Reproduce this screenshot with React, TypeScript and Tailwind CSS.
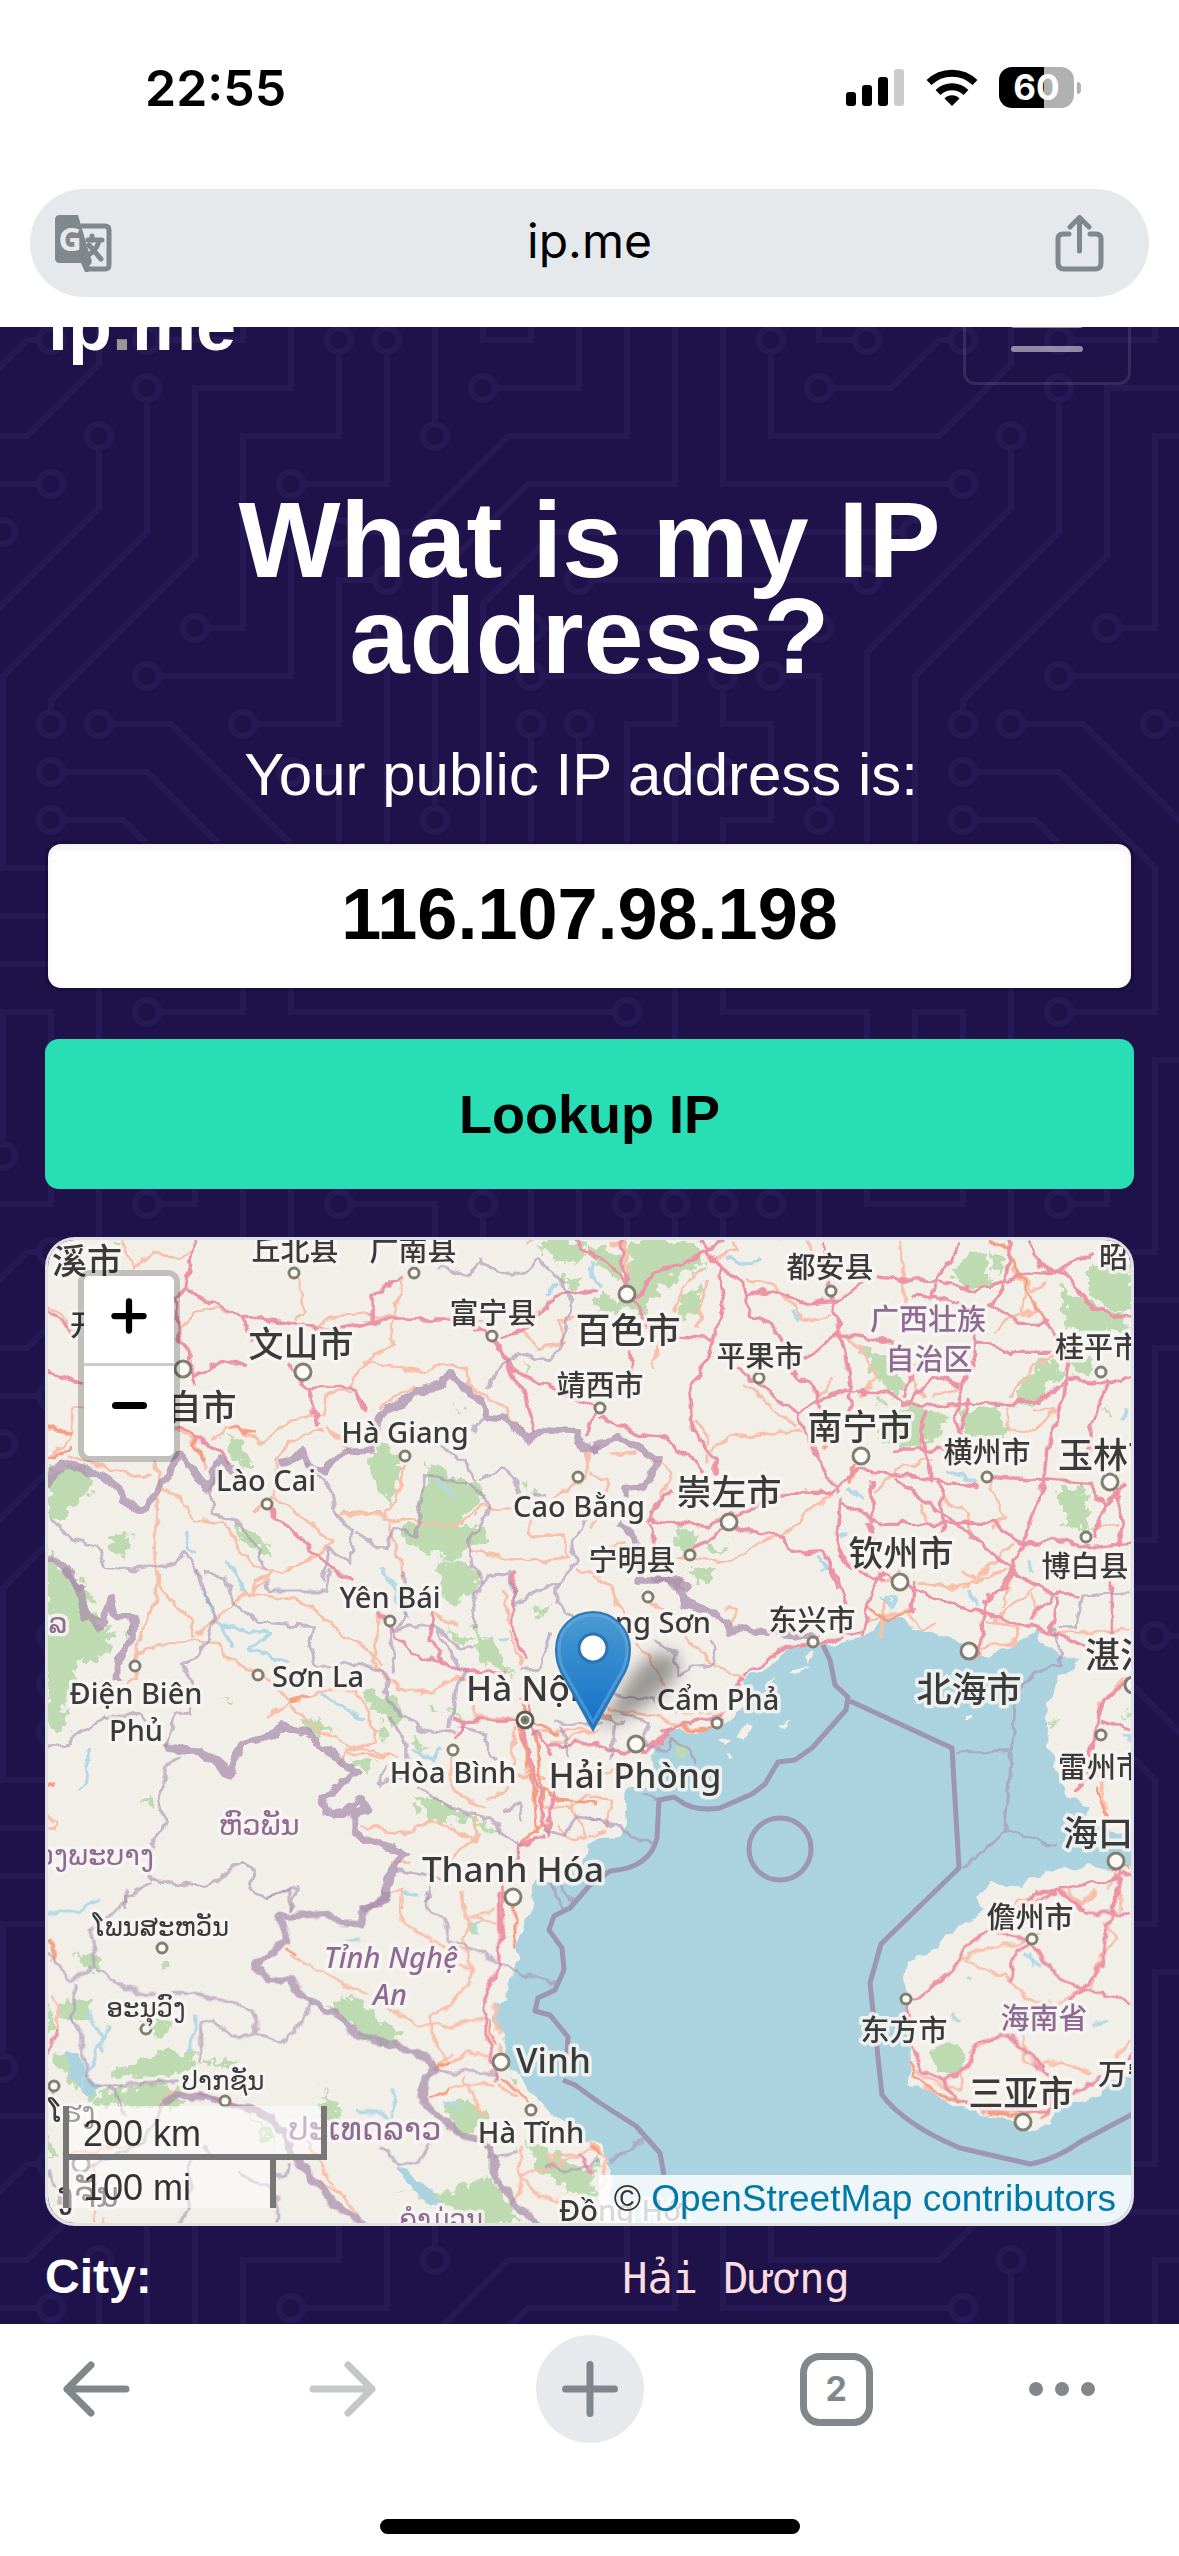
import React from 'react';
import { Plus } from 'lucide-react';

interface Place {
  name: string;
  x: number;
  y: number;
  size?: number;
  anchor?: 'start' | 'middle' | 'end';
  region?: boolean;
  italic?: boolean;
}

interface Tile {
  x: number;
  y: number;
  wood: string;
  water: string;
  minor: string;
  trunk: string;
  motorway: string;
  province: string;
  country: string;
}

// Node centres of the circuit pattern, the rings are cut out of the solid discs
const NODES = [
  [49, 225], [209, 273], [257, 225], [257, 241], [273, 129], [177, 129], [17, 81], [193, 113], [289, 113],
  [257, 17], [193, 225], [193, 161], [241, 17], [257, 33], [129, 129], [145, 225], [129, 113], [81, 161],
  [113, 241], [177, 161], [97, 177], [129, 225], [65, 289], [241, 177], [257, 145], [273, 193], [193, 241],
  [177, 145], [289, 33], [97, 97], [49, 145], [49, 33], [113, 33], [65, 129], [97, 81], [129, 33], [113, 17],
  [145, 65], [225, 289], [241, 145], [49, 17], [161, 49], [161, 17], [113, 97], [209, 17], [145, 193],
  [225, 17], [161, 225], [17, 161], [49, 49], [33, 209], [33, 65], [17, 33], [273, 49], [257, 209],
  [49, 241], [17, 193], [209, 257], [33, 161], [49, 257], [17, 177],
];

const CIRCUIT =
  'M44.1 224a5 5 0 1 1 0 2H0v-2h44.1zm160 48a5 5 0 1 1 0 2H82v-2h122.1zm57.8-46a5 5 0 1 1 0-2H304v2h-42.1zm0 16a5 5 0 1 1 0-2H304v2h-42.1zm6.2-114a5 5 0 1 1 0 2h-86.2a5 5 0 1 1 0-2h86.2zm-256-48a5 5 0 1 1 0 2H0v-2h12.1zm185.8 34a5 5 0 1 1 0-2h86.2a5 5 0 1 1 0 2h-86.2zM258 12.1a5 5 0 1 1-2 0V0h2v12.1zm-64 208a5 5 0 1 1-2 0v-54.2a5 5 0 1 1 2 0v54.2zm48-198.2V80h62v2h-64V21.9a5 5 0 1 1 2 0zm16 16V64h46v2h-48V37.9a5 5 0 1 1 2 0zm-128 96V208h16v12.1a5 5 0 1 1-2 0V210h-16v-76.1a5 5 0 1 1 2 0zm-5.9-21.9a5 5 0 1 1 0 2H114v48H85.9a5 5 0 1 1 0-2H112v-48h12.1zm-6.2 130a5 5 0 1 1 0-2H176v-74.1a5 5 0 1 1 2 0V242h-60.1zm-16-64a5 5 0 1 1 0-2H114v48h10.1a5 5 0 1 1 0 2H112v-48h-10.1zM66 284.1a5 5 0 1 1-2 0V274H50v30h-2v-32h18v12.1zM236.1 176a5 5 0 1 1 0 2H226v94h48v32h-2v-30h-48v-98h12.1zm25.8-30a5 5 0 1 1 0-2H274v44.1a5 5 0 1 1-2 0V146h-10.1zm-64 96a5 5 0 1 1 0-2H208v-80h16v-14h-42.1a5 5 0 1 1 0-2H226v18h-16v80h-12.1zm86.2-210a5 5 0 1 1 0 2H272V0h2v32h10.1zM98 101.9V146H53.9a5 5 0 1 1 0-2H96v-42.1a5 5 0 1 1 2 0zM53.9 34a5 5 0 1 1 0-2H80V0h2v34H53.9zm60.1 3.9V66H82v64H69.9a5 5 0 1 1 0-2H80V64h32V37.9a5 5 0 1 1 2 0zM101.9 82a5 5 0 1 1 0-2H128V37.9a5 5 0 1 1 2 0V82h-28.1zm16-64a5 5 0 1 1 0-2H146v44.1a5 5 0 1 1-2 0V18h-26.1zm102.2 270a5 5 0 1 1 0 2H98v14h-2v-16h124.1zM242 149.9V160h16v34h-16v62h48v48h-2v-46h-48v-66h16v-30h-16v-12.1a5 5 0 1 1 2 0zM53.9 18a5 5 0 1 1 0-2H64V2H48V0h18v18H53.9zm112 32a5 5 0 1 1 0-2H192V0h50v2h-48v48h-28.1zm-48-48a5 5 0 0 1-9.8-2h2.07a3 3 0 1 0 5.66 0H178v34h-18V21.9a5 5 0 1 1 2 0V32h14V2h-58.1zm0 96a5 5 0 1 1 0-2H137l32-32h39V21.9a5 5 0 1 1 2 0V66h-40.17l-32 32H117.9zm28.1 90.1a5 5 0 1 1-2 0v-76.51L175.59 80H224V21.9a5 5 0 1 1 2 0V82h-49.59L146 112.41v75.69zm16 32a5 5 0 1 1-2 0v-99.51L184.59 96H300.1a5 5 0 0 1 3.9-3.9v2.07a3 3 0 0 0 0 5.66v2.07a5 5 0 0 1-3.9-3.9H185.41L162 121.41v98.69zm-144-64a5 5 0 1 1-2 0v-3.51l48-48V48h32V0h2v50H66v55.41l-48 48v2.69zM50 53.9v43.51l-48 48V208h26.1a5 5 0 1 1 0 2H0v-65.41l48-48V53.9a5 5 0 1 1 2 0zm-16 16V89.41l-34 34v-2.82l32-32V69.9a5 5 0 1 1 2 0zM12.1 32a5 5 0 1 1 0 2H9.41L0 43.41V40.6L8.59 32h3.51zm265.8 18a5 5 0 1 1 0-2h18.69l7.41-7.41v2.82L297.41 50H277.9zm-16 160a5 5 0 1 1 0-2H288v-71.41l16-16v2.82l-14 14V210h-28.1zm-208 32a5 5 0 1 1 0-2H64v-22.59L40.59 194H21.9a5 5 0 1 1 0-2H41.41L66 216.59V242H53.9zm150.2 14a5 5 0 1 1 0 2H96v-56.6L56.6 162H37.9a5 5 0 1 1 0-2h19.5L98 200.6V256h106.1zm-150.2 2a5 5 0 1 1 0-2H80v-46.59L48.59 178H21.9a5 5 0 1 1 0-2H49.41L82 208.59V258H53.9zM34 39.8v1.61L9.41 66H0v-2h8.59L32 40.59V0h2v39.8zM2 300.1a5 5 0 0 1 3.9 3.9H3.83A3 3 0 0 0 0 302.17V256h18v48h-2v-46H2v42.1zM34 241v63h-2v-62H0v-2h34v1zM17 18H0v-2h16V0h2v18h-1zm273-2h14v2h-16V0h2v16zm-32 273v15h-2v-14h-14v14h-2v-16h18v1zM0 92.1A5.02 5.02 0 0 1 6 97a5 5 0 0 1-6 4.9v-2.07a3 3 0 1 0 0-5.66V92.1zM80 272h2v32h-2v-32zm37.9 32h-2.07a3 3 0 0 0-5.66 0h-2.07a5 5 0 0 1 9.8 0zM5.9 0A5.02 5.02 0 0 1 0 5.9V3.83A3 3 0 0 0 3.83 0H5.9zm294.2 0h2.07A3 3 0 0 0 304 3.83V5.9a5 5 0 0 1-3.9-5.9zm3.9 300.1v2.07a3 3 0 0 0-1.83 1.83h-2.07a5 5 0 0 1 3.9-3.9z';

const SEA =
  'M611 2230L611 2177 608 2157 601 2143 586 2142 551 2113 529 2090 508 2063 504 2037 494 2020 494 2003 506 2000 508 1980 517 1967 517 1943 533 1907 531 1895 538 1880 554 1883 575 1880 583 1863 590 1845 597 1838 622 1837 626 1823 624 1800 629 1787 647 1787 654 1757 661 1737 672 1730 694 1732 722 1727 747 1703 744 1680 769 1667 790 1648 811 1645 833 1645 861 1638 876 1630 882 1618 894 1616 911 1628 947 1638 963 1643 969 1658 986 1657 1008 1647 1026 1640 1036 1627 1040 1643 1054 1653 1079 1660 1076 1670 1058 1673 1054 1693 1047 1703 1045 1747 1054 1757 1058 1780 1065 1793 1079 1803 1090 1807 1085 1818 1097 1823 1110 1830 1150 1833V2230Z';

const ISLAND =
  'M1140 1863L1119 1870 1090 1867 1054 1870 1029 1877 1022 1887 994 1883 976 1897 979 1907 983 1910 958 1927 926 1953 908 1962 903 1977 910 2000 908 2023 911 2057 910 2085 929 2090 954 2107 976 2113 1011 2120 1029 2132 1051 2123 1054 2107 1079 2103 1097 2097 1108 2083 1140 2066Z';

const MARITIME =
  'M823 1645L830 1660 835 1685 848 1697 846 1710 812 1748 795 1760 778 1762 765 1784 752 1794 720 1808Q695 1812 680 1801L674 1797 659 1800 657 1838Q650 1868 610 1871L590 1885 570 1908 554 1916 549 1930 562 1948 564 1970 555 1990 538 1998 535 2011 550 2015 568 2037 567 2055M563 2080L575 2085 600 2103 636 2126 660 2153 664 2175M850 1701L952 1748 959 1868 881 1944 870 1983 882 2095Q905 2125 960 2148L1030 2164Q1055 2160 1080 2142L1140 2110';

// Road and border geometry, one entry per map tile, tile-local units
const TILES: Tile[] = [
  {
    x: 40,
    y: 1230,
    wood: 'M1390 30l90-5 50 30-25 40-80-5zM1475 140l40 10-10 30-30-10zM510 615l50 20 40 50-10 40-50-30zM960 640l50 40-5 60-30 80-50-70 10-80zM1090 690l60 50 90 30-5 50-60 60-80 30-40-60 20-80zM1010 880l80-10 150 20 10 40-90 50-60-10-70-20zM1120 980l80 20 20 90h-90zM550 890l60 20 30 40-10 30-60-50zM20 720l80-20 50 50-30 60-60 50h-40zM190 920l70-10-20 70-40-20zM1350 750l30 20-20 25zM20 960l50 50 50 80h-100zM200 30l30 0-20 20zM1350 390l20 20-10 20zM1170 520l20 20-15 10z',
    water: 'M1420 190l30-30M410 900l10 60 20 10M520 1000l30 30 30 60M950 1010l40 50 30 20M1110 750l50 60M1550 100l10 60',
    minor:
      'M20 230L60 250 90 300M230 30L260 120 310 60 390 90 420 60M710 100L730 180 740 240 720 270M390 300L440 240 500 235 530 250M770 300L820 260 900 250 990 265 990 350 920 390 880 440 870 480M1025 135L1000 220 990 265M900 390L1040 420 1080 430 1120 400 1190 410 1200 460 1300 540 1360 610M950 540L1010 490 1050 470M20 590L90 610 60 650 20 690M90 610L90 540 140 530M380 600L440 640 470 720M480 630L520 590 560 600 620 640 650 620 700 570 790 560 800 500 850 480 870 490M600 850L660 790 660 690 700 630 790 600M800 590L850 640 870 670M1020 700L1010 780 960 860 1060 880 1160 890 1240 830 1330 840M380 790L440 870 520 880 560 960 600 1010 680 1030 800 960 820 930 650 800M830 850H960M970 870L990 940 1020 1040M1370 860L1370 920 1460 920 1480 980 1370 1000 1200 960M320 690L340 770 380 790M330 790L320 950 325 1080M80 680L200 720 310 740M1150 260L1260 270M1400 240L1350 300 1400 350 1470 340 1460 270 1520 250M1530 660L1530 740 1440 800M1360 40L1390 30M640 1030L600 1080',
    trunk: 'M20 590L90 610M25 690L90 650M390 590L430 620 460 700M530 590L600 610',
    motorway:
      'M430 30L410 170 440 200 510 230 560 260 640 270 720 280 800 300 930 280 930 200 960 170 1025 135M410 170L380 200 390 330 420 370 430 460M560 260L600 330M20 430L120 460M20 240L60 270 90 320M430 440L500 400 580 410M700 400L740 480 870 470 910 540M750 480L780 590M380 590L500 660 530 710M640 840L700 890 780 980 870 1060M930 270L1150 270 1240 300 1290 350 1320 420 1410 460 1560 540M1290 340L1310 420 1360 500 1390 610M1290 320L1360 300 1440 200 1560 180M1500 30L1560 90M1560 540L1530 620',
    province:
      'M1120 110L1200 140 1230 90 1280 130 1360 130 1400 90 1460 160 1490 210 1470 330 1420 390 1340 370 1280 420 1250 480M480 740L480 850 550 870 610 960 630 1020M740 700L820 780 830 850 870 900 870 1000 810 960 790 1060M880 910L970 960 990 890 1050 920 1080 740 1160 750 1220 770M1120 650L1180 690 1220 750M1220 770L1260 830 1200 940 1210 1010 1240 1060M1230 750L1300 710 1330 760 1340 800 1420 790M30 860L90 930 160 950 190 1010 260 1020 370 1000 410 970 440 1030M1530 870L1490 930 1500 1000 1450 1060M1210 600L1240 560',
    country:
      'M20 770L60 700 130 720 210 760 230 810 290 840 350 750 390 670 430 720 470 780 500 690 560 740M670 700L740 670 750 710 800 720 850 665 930 660 950 560 1060 480 1120 470 1150 430 1240 520 1250 560 1310 570 1370 630 1420 600 1500 605 1520 650 1568 655M20 980L70 1010 120 1080',
  },
  {
    x: 590,
    y: 1230,
    wood: 'M110 30h160l60 60-60 40-90 60-30 70-60-40zM0 40l100 50-10 60-90-60zM20 200l80 10-20 40h-60zM1030 100l70-40 20 100-70 20-30-40zM1120 60l40 30-20 60zM1400 110l115-10v150l-60-10-60-50zM1320 170l100 60 80 30v45l-170-10zM750 340l80 40 60 90-40 30-60-70zM1280 380l50 40-80 100-70 5 20-60zM900 510l110 60-60 70-100 20-50-60zM1030 550l80-30 60 50-20 50-100 0zM240 900l60-5-20 90-40-30zM1310 765l80 10 10 60-15 70-60-40zM270 1020l90 10-40 30zM1340 390l70-10-10 60-60-20zM1440 530l20 20-20 10zM270 180l50-10-20 90-60 5zM1150 160l10 20-10 20zM330 940l60 20-50 10zM790 490l30 10 0 30z',
    water: 'M380 80l70 30 30-30M1000 720l80 40M730 780l30 30M700 920l20-10M640 980l30 40M560 240l30 30M1220 990l20 40M1490 570l15-30M0 120l30 50',
    minor:
      'M50 40H100L110 130M240 250L260 170 320 110M300 290L330 150M400 30L410 60 340 90M610 40L630 120M870 30L880 220 860 240M440 150L510 160 560 220 600 270 680 260M180 420L190 340 250 310M700 300L770 370 800 440 760 500M590 600L480 610 400 620 340 660M430 460L580 590M300 570L330 620 330 700M100 940L50 950M240 980L390 1000 450 950 560 900 630 830 680 790M550 790H610L600 770M800 790L850 720 960 690M930 820L940 880M940 500L880 420 960 380M1130 310L1200 250 1260 250M1210 260L1220 180 1180 110M1180 500L1250 400 1300 380M1170 530L1170 600 1230 610 1310 540 1240 540M1110 740L1160 860 1120 900M1280 160L1240 180 1200 130M1480 880L1400 900M1040 1080L1120 1010 1190 940M820 1060L880 1010M60 670H130M170 690L230 730 200 800M0 730L50 750 40 850 0 900M920 1060L1060 1070M690 440L640 500M960 500L1040 470M980 800L1060 850 1060 920',
    trunk: 'M1120 30L1170 60 1190 110 1230 190 1280 280M680 600L650 660M740 700L730 760M1150 1080L1190 1010',
    motorway:
      'M0 60L70 120 130 230 180 320M90 30L100 170M130 210L180 130 320 70 370 30M310 30L360 110 370 240 330 380 280 480 290 600 350 690 350 740M360 110L430 160 450 260 510 280 540 340 580 440 640 480 640 550M440 190L510 180 600 220 700 210 770 150M650 30L660 140 680 220 700 310 720 400 730 560M600 390L690 310 850 340M410 410L580 550 620 640 640 700 700 790M580 550L700 480 830 490 890 520 960 530 1060 520 1180 520 1260 510 1340 450 1450 460 1515 440M800 140L870 150 970 150 1040 40M970 150L1080 180 1200 140 1320 120 1410 70M970 150L950 210M1180 30L1160 170 1120 220 1200 280 1280 280M1080 330L1180 370H1290M1230 30L1260 110 1330 130 1390 210 1470 260 1515 260M1270 270L1340 400 1330 500 1280 650 1270 760 1220 920 1180 1020 1150 1080M900 200H970L1080 240 1080 370 1040 490 1020 560 1040 620M900 430L880 500M0 480L60 500 120 440 110 360M30 560L140 610 200 620 290 690 320 730M160 880L180 830 230 780M160 870L330 890 400 850M270 970L380 890 540 920 560 970 660 965M400 870L450 830 550 790 670 790 740 720 850 730 960 750 1090 770M850 660L960 660 1060 650M790 750V880M850 740L960 830 1050 900 1180 1020 1280 1080M700 800L690 960 720 1000 820 1060M700 820L820 880 1130 880 1210 940 1320 930 1400 950 1515 940M980 750L990 900M1120 740L1280 750 1400 760 1440 830 1410 930M1450 450L1400 600 1400 680M1440 830L1500 760M1470 790L1495 870 1480 940M170 880L180 950M660 970L690 1080M560 20L530 30M240 320L340 330M940 540L930 640 960 760M880 530L960 440 1040 470M1060 510L1040 600M780 880L800 930',
    province: 'M1500 400L1515 380M170 1040L250 1080',
    country: 'M0 660L70 620 130 650 190 690 150 770 100 775 100 800M80 880L130 920 140 1040M180 1045L250 1060 280 1080',
  },
  {
    x: 40,
    y: 1570,
    wood: 'M20 0h60l50 60 20 90 50 20-5 80-80 20-40 110-5 100h-50zM1110 0h100l30 30-80 80-30-30zM1200 170l60 30 70 130-80-50zM910 360l80 20 30 50-20 40-90-70zM1090 400l30 20-20 20zM1150 410l30 30-20 10zM1140 180l60 30-20 15zM1380 130l60-40-20 50zM730 440l70 20 20 30-60-10zM860 570h80l-20 40zM1040 660l60 20 110 70 80 30-10 20-100-50-60 10-50-40zM285 685h35v15h-35zM510 390l30 10-20 5zM940 460l40 30-10 30zM1040 510l40 20-10 30zM1010 490l30 20zM240 170l15 0-5 50z',
    water: 'M450 60L490 140 510 170 540 230M510 170L640 190 590 240 700 280M970 20L1000 80 1040 150M1050 540L1100 570 1130 530M790 370L850 420 910 445M1280 200l30 10M550 10l20 60M1020 970l40 10M1480 890l20 30M100 660L130 640 135 540',
    minor:
      'M330 0L330 90 290 170 270 260 270 330 240 340M270 260L310 230 430 210 500 220 530 270 590 300 640 330 700 390 640 440M330 30L380 110 430 150 430 200M440 190L540 100 580 70 720 90 780 130 840 190 900 220 960 290M600 70L600 30 660 0M720 390L800 360 880 360 920 430 940 520 860 540 840 580M700 400L750 460 870 530 1000 560M860 550L980 560M950 200L930 280 1000 350 1100 370 1150 320 1200 330M950 130L940 250M1300 60L1310 150 1330 190M1100 130L1170 170M1150 550L1150 650 1200 690 1250 710M1210 410L1220 440 1330 450M1330 470L1320 640M1400 480H1568M1430 520L1560 480M1340 620H1420M1250 690L1310 650M1390 700L1480 720 1540 670M1480 700L1530 800 1480 810 1450 760M900 770L1020 790 1100 750 1220 810 1230 790M1220 730L1220 810 1180 830 1150 870M980 960L1020 960 1020 1020M20 650L40 640M20 740L45 750 40 780 20 770M1180 960L1190 1020M1040 880L980 880M1310 180L1350 290M1500 0L1568 20',
    trunk: 'M20 650L40 645M1340 380L1390 500 1400 620 1410 760 1340 830M1340 470L1380 640 1390 790M700 390L750 375M1360 440L1450 490M1560 700L1450 690 1390 650M1300 900L1300 1020',
    motorway: 'M830 0L870 40M950 120L1000 200 1060 260 1140 280 1180 300 1300 310M1100 130L1090 210 1130 280M1330 0L1320 170 1360 270M1160 450L1340 455M1350 480L1390 640 1420 790M1390 480L1440 560M1420 525L1568 520M1160 510L1190 450M1370 440L1370 330M1410 800L1340 830 1340 880M1290 960L1285 1020M1440 650L1420 800',
    province:
      'M20 530L80 520 180 440 280 430 300 460M440 0L460 80 490 130 470 210 440 260 390 280 430 330 420 430 380 430 370 480 350 530M460 10L520 20 540 100 620 160 770 170 750 230 780 290 880 280 970 310 970 380 990 420 1070 480 1160 490M630 30L640 60 800 60 810 0M980 170L990 310M1020 0L1030 140 990 180 1100 160 1180 240 1220 230M1110 180L1180 300M1220 180L1210 100 1250 20 1320 10 1330 100 1450 40 1450 100 1500 150M1150 480L1170 330 1200 300M1350 300L1400 290 1430 190M390 560L350 590 350 660 330 700 350 760 310 830 310 930 440 950 500 930 560 880 600 900 590 960 630 980 720 950 700 1020M310 940L240 980 240 1020M980 440L1030 530 1030 620 950 640 970 580M1170 470L1250 490 1250 540 1280 570M1390 480L1380 500M1440 460H1568M1460 470L1480 560M1060 650L1140 710 1240 740 1350 830M1300 720L1340 700 1350 760M1000 900L1130 930M1100 930L1080 1000M1410 780L1470 800 1500 740 1568 750M1430 940L1470 1020M1450 930L1500 1010',
    country:
      'M70 0L110 50 130 140 170 170 200 90 210 140 260 140 260 200 220 270 220 330M350 530L440 545 490 570 530 610 570 520 640 500 680 470 750 490 800 540 890 610 790 680 800 730 850 730 900 690 920 720 880 730 880 790 1020 850 970 930 970 990 900 1020',
  },
  {
    x: 590,
    y: 1570,
    wood: 'M230 525l40 5 10 30-30 0zM280 0h80l-30 30zM1300 440l10 30-10 10zM290 380l40 20-20 20zM1495 420l20 20-15 10z',
    water: 'M1060 60l20 50M830 80l30 0-20 40zM650 0l10-10M1490 500l25 0M1500 510h15',
    minor:
      'M60 60L130 220 200 320 210 360M170 90L350 290 430 330M0 20L70 60 70 110M380 120L410 115 400 170M770 150L860 130 900 120M820 90L820 210M890 130L930 180 970 160M920 40L1030 50 1160 0M1040 0L1100 30M1110 150L1200 170 1200 220 1110 230M1130 150L1250 50M1190 0L1160 110M1090 240L1200 210M1240 70L1250 140M1310 190L1515 180M1500 320L1430 400 1420 460M1420 600L1450 720M0 430L60 450M50 420L200 440 240 470 290 485M240 430L380 425M0 680L60 690 40 770M0 800L40 780M0 620L90 590M1310 960L1380 1000 1420 960M1300 960L1210 990 1160 1020M1480 890L1450 960',
    trunk: 'M780 110L830 150 900 125M1080 270L1100 250M240 470L330 480 380 440M1460 900L1515 890M0 430L60 440M1420 650L1450 740',
    motorway:
      'M680 0L720 100M820 0L780 100 760 200M820 10L910 60 1030 110 1110 130 1200 160 1300 190 1380 230M910 30L900 130M1170 0L1300 70 1230 150M1300 70L1370 75M1120 70L1100 150 1090 260M1100 100L1170 50 1190 0M1310 80L1290 190M1460 30L1460 190M430 320L550 230 640 225 760 180M400 360L430 330M0 520L100 550 160 550 240 470 380 430M200 490L240 470M160 530L230 490M1515 320L1440 390 1410 480 1400 620M1430 450L1510 480M1360 660L1400 620M1515 910L1400 940 1310 960 1250 970 1210 1010M1300 960L1390 1020M1490 900L1460 1020',
    province:
      'M0 360L180 390M180 210L240 250 240 320 300 290 350 280 340 210M90 430L160 460 160 530 210 535 230 510 290 550 290 590M0 740L40 760 80 770 170 825M1310 170L1360 170 1380 75 1515 65M1300 170L1320 280 1225 320 1190 400 1180 550 1165 785 1310 830M1020 545H1180M1165 785L1040 890M70 450L60 560M150 670L190 690M0 440L90 455',
    country: 'M130 30L240 30 270 100 350 130 390 160 390 190 430 170 470 190H520L640 200',
  },
  {
    x: 40,
    y: 1890,
    wood: 'M800 350l80-35 60 70 75 40-20 40-80-15-60-70zM200 540l150-50 90-5-20 50-60 20-160 10zM180 600l150-20 90 15-60 60-220-10zM20 500l50-20 90 120-20 40zM100 330l50 10-20 50-70-10 20-70zM270 400l90-10 10 40h-90zM100 200l50-20 20 60-30 0zM430 520l130-5-20 20zM790 600l60 80-40 20-20-30zM1130 640l80-10 50 50-70 60-50-40zM980 900l80 20 100-20 90-40 60 70 40 70h-140l-40-40zM580 660l60 70 10 50zM1360 750l200 100-20 80-80-40-60-50zM20 740l40 50-40 30zM1190 100l50-10-20 50zM1290 150l20 50zM1310 560l40 20-20 10zM330 210l30 20-20 5zM20 350l20 50-20 50zM680 810l30 30z',
    water: 'M20 75L100 60 170 30M130 370L160 420 180 490M200 400L150 500 110 600M440 370L420 490M860 150l30 0M880 660L940 670 980 680M1130 640l60 10M550 550l20 40M1215 100l10 30M990 600L990 680',
    minor:
      'M1010 20L1010 80 1060 130 1130 170 1200 180M1190 0L1180 50 1210 100 1180 150 1210 240 1200 290 1140 350 1090 380 1100 450 1150 520 1200 490 1260 500M1050 400L1150 410 1250 390M700 200L780 240 840 280 920 310M970 350L1050 400M1110 530L1160 490M1090 620L1160 590 1270 580M1190 560L1210 620 1250 680M1330 30L1330 170M1270 60L1210 80 1280 100M30 140L45 200 20 220M30 320L50 370 50 420M340 650L360 610 420 605M60 790L170 780 290 760M150 820V1000M740 740L820 880 890 970M540 645L620 660M1270 340L1290 440M1350 770L1340 850 1420 840 1530 780M1340 850L1400 920 1470 940M1430 840L1430 800 1560 780M1350 860L1320 950M1150 230L1210 235M1280 460L1300 500 1260 550M185 980V1000M780 880L860 920M1280 580L1330 620',
    trunk: 'M30 140L40 210M1260 390L1270 460M1290 560L1370 640M1090 620L1140 600M690 180L720 200M1105 535L1150 520M1330 20V180',
    motorway: 'M1285 0V230L1245 310 1250 430 1265 500 1275 570M1300 0L1290 160M50 420L35 460 25 490M35 600V640M1510 780L1540 850M440 610L560 645',
    province:
      'M240 0L240 40 140 120 160 230 90 270 20 190M160 240L220 280 300 310 440 310 600 360 605 430 560 450 480 390 450 400 450 520M100 280L90 370 120 430 120 510 150 590 390 575M200 590L240 680M605 430L690 455 750 370 750 330M350 640L290 760 130 830M1080 0L1090 60 1130 90 1140 150 1230 180 1280 220 1330 240 1440 280M700 0L700 60M630 20L700 0M960 770L1000 820 1060 830 1090 760M1110 540L1160 550 1210 540 1280 560M1270 800L1340 780M1420 830L1500 840 1568 810M420 800L415 960 390 1000M20 840L60 940M550 850L640 890 670 930 660 1000M660 860L690 860 700 820M450 770L480 790M1240 760L1260 800',
    country:
      'M970 0L970 20 910 60 890 100 840 100 800 70 670 80 690 150 600 230 640 265 700 270 740 320 800 360 850 390 900 440 990 460 1080 500 1110 540 1080 560 1070 620 1110 680 1180 735 1240 750 1270 800 1270 850 1320 930 1390 1000M350 640L380 615 460 620 560 650 630 670 690 730 700 780 760 860 820 940 910 1000',
  },
  {
    x: 590,
    y: 1890,
    wood: 'M920 470l60-10 20-40 60 50-10 60-70 20-60-40zM1240 290l50-10 30 10-10 40-60 5zM940 350l50-5-30 20zM1430 350l30 0-20 25zM1210 490l20 20zM0 800l40 30-40 10zM1040 600h30l-20 15z',
    water: 'M1210 190l60 40M1010 370l20 20M1410 410l40-20M1050 260l20 10M1230 190l10 40',
    minor:
      'M900 330L1000 260 1040 210 1090 180 1200 160 1280 120M1050 210L1160 260 1180 280 1230 330 1300 340 1360 310M910 540L1000 600 1040 600 1040 550M1400 300L1430 200 1470 150 1440 100M1210 440L1220 510 1260 520M1260 530L1320 510 1400 550M1060 490L1110 460M1110 640L1280 660M1470 500L1515 450M1480 0L1490 60M1340 0L1370 40 1420 0M930 590L1000 620M1280 560L1290 650M0 760L50 800 40 850 30 900',
    trunk: 'M900 520L910 560 990 620 1060 640M1100 665L1180 675 1280 665M1280 650L1270 690M0 770L30 790',
    motorway:
      'M1300 10L1200 60 1160 90 1050 170 1020 240 960 290 890 340 900 460 930 540 990 575 1060 530 1080 465 1160 430 1250 510 1280 560M1300 0L1390 70H1515M1140 120L1240 160 1290 240 1380 300 1480 320 1515 350M1240 160L1190 180 1180 280M1480 0L1460 80 1440 150 1430 230 1380 300M990 575L1030 635 1100 660 1280 665 1290 600 1360 610 1430 560M1380 300L1340 330M1250 0L1300 10M1480 550L1515 500',
    province: 'M60 810L150 750',
    country: '',
  },
];

const PLACES: Place[] = [
  { name: '溪市', x: 87, y: 1274, size: 35 },
  { name: '丘北县', x: 295, y: 1261 },
  { name: '广南县', x: 413, y: 1261 },
  { name: '富宁县', x: 493, y: 1324 },
  { name: '文山市', x: 301, y: 1357, size: 35 },
  { name: '开远市', x: 70, y: 1336, anchor: 'start' },
  { name: '蒙自市', x: 184, y: 1420, size: 35 },
  { name: 'Hà Giang', x: 405, y: 1443 },
  { name: 'Lào Cai', x: 266, y: 1491 },
  { name: 'Cao Bằng', x: 579, y: 1517 },
  { name: '百色市', x: 628, y: 1343, size: 35 },
  { name: '靖西市', x: 600, y: 1396 },
  { name: '都安县', x: 830, y: 1278 },
  { name: '广西壮族', x: 928, y: 1330, region: true },
  { name: '自治区', x: 929, y: 1370, region: true },
  { name: '平果市', x: 760, y: 1367 },
  { name: '昭平县', x: 1099, y: 1268, anchor: 'start' },
  { name: '桂平市', x: 1055, y: 1358, anchor: 'start' },
  { name: '南宁市', x: 860, y: 1440, size: 35 },
  { name: '横州市', x: 987, y: 1463 },
  { name: '玉林市', x: 1058, y: 1468, size: 35, anchor: 'start' },
  { name: '崇左市', x: 729, y: 1505, size: 35 },
  { name: '宁明县', x: 632, y: 1571 },
  { name: '钦州市', x: 901, y: 1566, size: 35 },
  { name: '博白县', x: 1085, y: 1577 },
  { name: 'Yên Bái', x: 390, y: 1608 },
  { name: 'Sơn La', x: 318, y: 1687 },
  { name: 'Điện Biên', x: 136, y: 1704 },
  { name: 'Phủ', x: 136, y: 1741 },
  { name: 'Hà Nội', x: 466, y: 1701, size: 35, anchor: 'start' },
  { name: 'Hòa Bình', x: 453, y: 1783 },
  { name: 'Hải Phòng', x: 635, y: 1788, size: 35 },
  { name: 'Lạng Sơn', x: 711, y: 1633, anchor: 'end' },
  { name: 'Cẩm Phả', x: 718, y: 1710 },
  { name: '东兴市', x: 812, y: 1631 },
  { name: '北海市', x: 969, y: 1702, size: 35 },
  { name: '湛江市', x: 1085, y: 1668, size: 35, anchor: 'start' },
  { name: '雷州市', x: 1058, y: 1778, anchor: 'start' },
  { name: '海口市', x: 1063, y: 1846, size: 35, anchor: 'start' },
  { name: '儋州市', x: 1030, y: 1928 },
  { name: '海南省', x: 1044, y: 2029, region: true },
  { name: '东方市', x: 904, y: 2041 },
  { name: '三亚市', x: 1021, y: 2106, size: 35 },
  { name: '万宁市', x: 1098, y: 2085, anchor: 'start' },
  { name: 'Thanh Hóa', x: 513, y: 1882, size: 35 },
  { name: 'Vinh', x: 516, y: 2073, size: 35, anchor: 'start' },
  { name: 'Hà Tĩnh', x: 531, y: 2143 },
  { name: 'Đồng Hới', x: 559, y: 2221, anchor: 'start' },
  { name: 'Tỉnh Nghệ', x: 391, y: 1968, region: true, italic: true },
  { name: 'An', x: 390, y: 2005, region: true, italic: true },
  { name: 'ຫົວພັນ', x: 259, y: 1835, region: true },
  { name: 'ວງພະບາງ', x: 154, y: 1865, region: true, anchor: 'end' },
  { name: 'ລ', x: 58, y: 1633, region: true },
  { name: 'ໂພນສະຫວັນ', x: 161, y: 1936, size: 26 },
  { name: 'ອະນຸວົງ', x: 146, y: 2017, size: 26 },
  { name: 'ປາກຊັນ', x: 223, y: 2090, size: 26 },
  { name: 'ປະເທດລາວ', x: 365, y: 2140, size: 32, region: true },
  { name: 'ຄຳມ່ວນ', x: 441, y: 2228, size: 26, region: true },
  { name: 'ໂຮງ', x: 72, y: 2122 },
  { name: 'ງຈັນ', x: 88, y: 2207, size: 35 },
];

const TOWNS = [
  [294, 1273], [414, 1273], [492, 1336], [405, 1456], [267, 1504], [578, 1477], [600, 1408], [831, 1291],
  [759, 1378], [1101, 1372], [987, 1477], [690, 1555], [1086, 1537], [390, 1621], [258, 1675], [135, 1666],
  [453, 1750], [648, 1597], [717, 1723], [813, 1642], [1101, 1735], [1032, 1939], [906, 1999], [531, 2110],
  [162, 1948], [146, 2029], [225, 2101], [54, 2086],
];

const CITIES = [
  [303, 1372], [183, 1369], [627, 1294], [861, 1456], [1110, 1482], [729, 1522], [900, 1582], [636, 1744],
  [969, 1651], [1116, 1861], [1023, 2122], [501, 2062], [513, 1897], [81, 2164], [1133, 1685],
];

function CircuitBackground() {
  return (
    <svg className="absolute inset-0 h-full w-full" aria-hidden="true">
      <defs>
        <pattern
          id="circuit"
          width="304"
          height="304"
          patternUnits="userSpaceOnUse"
          patternTransform="translate(0 -86) scale(3)"
        >
          <path d={CIRCUIT} fill="#261A56" />
          {NODES.map(([cx, cy]) => (
            <circle key={`${cx}-${cy}`} cx={cx} cy={cy} r="3" fill="#1F124B" />
          ))}
        </pattern>
      </defs>
      <rect width="100%" height="100%" fill="url(#circuit)" />
    </svg>
  );
}

function MapCanvas() {
  return (
    <svg viewBox="48 1240 1083 983" className="block h-auto w-full" role="img" aria-label="Map">
      <defs>
        <filter id="rough" x="-5%" y="-5%" width="110%" height="110%">
          <feTurbulence type="fractalNoise" baseFrequency="0.07" numOctaves="2" seed="4" />
          <feDisplacementMap in="SourceGraphic" scale="11" xChannelSelector="R" yChannelSelector="G" />
        </filter>
        <filter id="ragged" x="-5%" y="-5%" width="110%" height="110%">
          <feTurbulence type="fractalNoise" baseFrequency="0.09" numOctaves="3" seed="9" />
          <feDisplacementMap in="SourceGraphic" scale="22" xChannelSelector="R" yChannelSelector="G" />
        </filter>
        <filter id="soft" x="-40%" y="-40%" width="180%" height="180%">
          <feGaussianBlur stdDeviation="8" />
        </filter>
        <linearGradient id="pin" x1="0" y1="0" x2="0" y2="1">
          <stop offset="0" stopColor="#4B9CD3" />
          <stop offset="1" stopColor="#126FC6" />
        </linearGradient>
      </defs>

      <rect x="48" y="1240" width="1083" height="983" fill="#F2EFE9" />

      <g filter="url(#ragged)" fill="#BDDAB1">
        {TILES.map((t) => (
          <path key={`${t.x}-${t.y}`} d={t.wood} transform={`translate(${t.x} ${t.y}) scale(0.3571 0.3333)`} />
        ))}
      </g>

      <g filter="url(#rough)">
        <path d={SEA} fill="#AAD3DF" />
        <path d={ISLAND} fill="#F2EFE9" />
        <g fill="#F2EFE9">
          <path d="M735 1735l12-12 7 2-10 14zM720 1742l10-4-3 8zM780 1725l14-7-10 12zM790 1672l20-6-14 8zM765 1680l10-4-4 6zM728 1752l5 4-4 4zM965 1715h6v5h-6zM806 1655l8-2-6 12z" />
        </g>
        <path d="M676 1745l14 3-6 11-10-6zM928 2050l25-10 15 18-10 17-22-3z" fill="#BDDAB1" />
      </g>

      <path
        d="M66 2050l12 6 10 22 14 8-10 12-12-4-10-18zM395 2165l20 10 15 15 14 14-12 2-18-14zM878 1597l14 2-5 9z"
        fill="#AAD3DF"
        filter="url(#rough)"
      />

      <g filter="url(#rough)" fill="none" strokeLinejoin="round">
        {TILES.map((t) => (
          <g key={`${t.x}-${t.y}`} transform={`translate(${t.x} ${t.y}) scale(0.3571 0.3333)`}>
            <path d={t.water} stroke="#B4D9E6" strokeWidth="10" />
            <path d={t.minor} stroke="#F9BFA8" strokeWidth="8" />
            <path d={t.trunk} stroke="#F79E82" strokeWidth="9" />
            <path d={t.motorway} stroke="#EC93A6" strokeWidth="10" />
            <path d={t.province} stroke="#A98FB0" strokeOpacity="0.6" strokeWidth="9" />
            <path d={t.country} stroke="#A98FAC" strokeOpacity="0.75" strokeWidth="22" />
          </g>
        ))}
      </g>

      <g fill="none" stroke="#9C95B4" strokeWidth="5" strokeLinejoin="round">
        <path d={MARITIME} />
        <ellipse cx="780" cy="1849" rx="31" ry="31" />
      </g>

      <g fill="#FAF9F6" stroke="#827F72" strokeWidth="3">
        {TOWNS.map(([cx, cy]) => (
          <circle key={`${cx}-${cy}`} cx={cx} cy={cy} r="5" />
        ))}
        {CITIES.map(([cx, cy]) => (
          <circle key={`${cx}-${cy}`} cx={cx} cy={cy} r="8" />
        ))}
        <circle cx="525" cy="1720" r="8" stroke="#5F5C55" />
        <circle cx="525" cy="1720" r="3" fill="#5F5C55" />
      </g>

      <g
        className="font-['Noto_Sans','Noto_Sans_CJK_SC','DejaVu_Sans',sans-serif] font-medium"
        paintOrder="stroke"
        stroke="#F8F6F2"
        strokeOpacity="0.85"
        strokeWidth="7"
        strokeLinejoin="round"
      >
        {PLACES.map((p) => (
          <text
            key={`${p.name}-${p.y}`}
            x={p.x}
            y={p.y}
            fontSize={p.size ?? 29}
            textAnchor={p.anchor ?? 'middle'}
            fontStyle={p.italic ? 'italic' : 'normal'}
            fill={p.region ? '#8F6A92' : '#3A3A3A'}
          >
            {p.name}
          </text>
        ))}
      </g>

      {/* Marker */}
      <path
        d="M598 1728L622 1690Q645 1650 668 1652Q690 1662 668 1685Q640 1715 598 1728Z"
        fill="#000"
        opacity="0.36"
        filter="url(#soft)"
      />
      <path
        d="M593 1730L561 1672Q556 1662 556 1649A37 37 0 0 1 630 1649Q630 1662 625 1672Z"
        fill="url(#pin)"
        stroke="#2C78B4"
        strokeWidth="2"
      />
      <path
        d="M593 1722L564 1671Q559 1661 559 1649A34 34 0 0 1 627 1649Q627 1661 622 1671Z"
        fill="none"
        stroke="#6FB0DD"
        strokeOpacity="0.5"
        strokeWidth="3"
      />
      <circle cx="593" cy="1648" r="14" fill="#fff" stroke="#2A73AE" strokeWidth="3" />
    </svg>
  );
}

function StatusBar() {
  return (
    <div className="flex items-start justify-between pt-[58px] pr-[98px] pl-[145px] text-black">
      <time className="font-['Inter',sans-serif] text-[50px] leading-[60px] font-semibold">22:55</time>
      <div className="flex items-center gap-[21px] pt-[9px]">
        <svg width="59" height="41" viewBox="0 0 59 41" aria-hidden="true">
          <rect x="0" y="25" width="10" height="14" rx="3" />
          <rect x="16" y="18" width="10" height="21" rx="3" />
          <rect x="32" y="10" width="10" height="29" rx="3" />
          <rect x="48" y="2" width="10" height="37" rx="3" fill="#CCCCCC" />
        </svg>
        <svg width="52" height="41" viewBox="0 0 52 41" aria-hidden="true">
          <path d="M26 39L18.500 31.500A10.500 10.500 0 0 1 33.500 31.500Z" />
          <path d="M12 25.500A20 20 0 0 1 40 25.500" fill="none" stroke="#000" strokeWidth="7" />
          <path d="M3 15.500A33 33 0 0 1 49 15.500" fill="none" stroke="#000" strokeWidth="7" />
        </svg>
        <div className="flex items-center gap-[3px]">
          <div className="flex h-[41px] w-[75px] items-center justify-center rounded-[13px] bg-linear-to-r from-black from-60% to-[#B1B1B1] to-60% font-['Inter',sans-serif] text-[35px] leading-none font-bold text-white">
            60
          </div>
          <div className="h-3 w-1 rounded-r-full bg-[#B1B1B1]" />
        </div>
      </div>
    </div>
  );
}

function AddressBar() {
  return (
    <div className="mx-[30px] mt-[71px] mb-[30px] flex h-[108px] items-center justify-between rounded-full bg-[#E5E9EC] pr-[45px] pl-[25px]">
      <button type="button" aria-label="Translate" className="pr-3">
        <svg width="57" height="57" viewBox="0 0 57 57" aria-hidden="true">
          <path d="M26 11H50Q54 11 54 15V50Q54 54 50 54H30" fill="none" stroke="#80888B" strokeWidth="5" />
          <path d="M5 0H23L35 41Q39 48 34 51Q37 54 33 57H30L26 48H5Q0 48 0 43V5Q0 0 5 0Z" fill="#80888B" />
          <g fill="none" stroke="#80888B" strokeWidth="5" strokeLinecap="round">
            <path d="M33 25H47" />
            <path d="M37 21V25" />
            <path d="M44 26Q42 34 35 39" />
            <path d="M34 30L46 44" />
          </g>
          <text x="15" y="36" textAnchor="middle" fontSize="32" fill="#E5E9EC" className="font-['Open_Sans',sans-serif] font-bold">
            G
          </text>
        </svg>
      </button>
      <span className="pb-1 font-['Inter',sans-serif] text-[48px] leading-[60px] text-black">ip.me</span>
      <button type="button" aria-label="Share">
        <svg width="49" height="57" viewBox="0 0 49 57" fill="none" stroke="#80888B" strokeWidth="5" strokeLinecap="round" strokeLinejoin="round" aria-hidden="true">
          <path d="M14 19H8Q3 19 3 24V48Q3 54 9 54H40Q46 54 46 48V24Q46 19 41 19H35" />
          <path d="M24.500 36V3M15 12L24.500 2.500 34 12" />
        </svg>
      </button>
    </div>
  );
}

function MapPanel() {
  return (
    <section className="relative mt-12 overflow-hidden rounded-[30px] border-3 border-[#DEE2E6]">
      <MapCanvas />

      {/* Zoom */}
      <div className="absolute top-[30px] left-[30px] flex flex-col rounded-xl border-6 border-black/20">
        <button type="button" aria-label="Zoom in" className="flex h-[90px] w-[90px] items-center justify-center rounded-t-md border-b-3 border-[#CCCCCC] bg-white pb-2">
          <Plus className="h-[50px] w-[50px] text-black" strokeWidth={3} />
        </button>
        <button type="button" aria-label="Zoom out" className="flex h-[90px] w-[90px] items-center justify-center rounded-b-md bg-white pb-3">
          <span className="h-[7px] w-[35px] rounded-full bg-black" />
        </button>
      </div>

      {/* Scale */}
      <div className="absolute bottom-[15px] left-[15px] flex flex-col items-start font-['Liberation_Sans',sans-serif] text-[36px] leading-14 text-[#333333]">
        <div className="h-[54px] w-[264px] border-6 border-t-0 border-[#777777] bg-white/50 pl-[14px]">200 km</div>
        <div className="h-12 w-[213px] border-x-6 border-[#777777] bg-white/50 pl-[14px]">100 mi</div>
      </div>

      <div className="absolute right-0 bottom-0 bg-white/80 px-[15px] font-['Liberation_Sans',sans-serif] text-[37px] leading-12 text-[#333333]">
        ©{' '}
        <a href="#osm" className="text-[#0078A8]">
          OpenStreetMap contributors
        </a>
      </div>
    </section>
  );
}

function BottomBar() {
  return (
    <footer className="bg-white pt-[11px] pb-6">
      <nav className="flex items-center justify-between px-[42px]">
        <button type="button" aria-label="Back" className="flex h-[108px] w-[108px] items-center justify-center">
          <svg width="68" height="56" viewBox="0 0 68 56" fill="none" stroke="#80888B" strokeWidth="7" strokeLinecap="round" strokeLinejoin="round" aria-hidden="true">
            <path d="M64 28H5M29 4L5 28 29 52" />
          </svg>
        </button>
        <button type="button" aria-label="Forward" className="flex h-[108px] w-[108px] items-center justify-center">
          <svg width="68" height="56" viewBox="0 0 68 56" fill="none" stroke="#C6C7C7" strokeWidth="7" strokeLinecap="round" strokeLinejoin="round" aria-hidden="true">
            <path d="M4 28H63M39 4L63 28 39 52" />
          </svg>
        </button>
        <button type="button" aria-label="New tab" className="flex h-[108px] w-[108px] items-center justify-center rounded-full bg-[#E8E9ED] text-[#81858D]">
          <Plus className="h-[84px] w-[84px]" strokeWidth={2} />
        </button>
        <button type="button" aria-label="Tabs" className="flex h-[108px] w-[108px] items-center justify-center">
          <span className="flex h-[73px] w-[73px] items-center justify-center rounded-[20px] border-7 border-[#80888B] font-['Inter',sans-serif] text-[34px] leading-none font-bold text-[#80888B]">
            2
          </span>
        </button>
        <button type="button" aria-label="More" className="flex h-[108px] w-[108px] items-center gap-3">
          <span className="h-[14px] w-[14px] rounded-full bg-[#80888B]" />
          <span className="h-[14px] w-[14px] rounded-full bg-[#80888B]" />
          <span className="h-[14px] w-[14px] rounded-full bg-[#80888B]" />
        </button>
      </nav>
      <div className="mx-auto mt-[76px] h-[15px] w-[420px] rounded-full bg-black" />
    </footer>
  );
}

export default function App() {
  return (
    <div className="flex min-h-screen flex-col bg-white">
      <StatusBar />
      <AddressBar />

      <main className="relative grow overflow-hidden bg-[#1F124B] font-['Liberation_Sans',sans-serif] text-white">
        <CircuitBackground />

        <div className="relative px-[45px] pb-[9px]">
          {/* Site header, scrolled partly under the address bar */}
          <header className="-mt-[62px] flex h-[120px] items-center justify-between px-[3px]">
            <a href="#home" className="text-[72px] leading-none font-bold">
              ip<span className="text-[#999999]">.</span>me
            </a>
            <button
              type="button"
              aria-label="Menu"
              className="flex h-[120px] w-[168px] flex-col items-center justify-center gap-[18px] rounded-xl border-3 border-white/10"
            >
              <span className="h-[6px] w-[72px] rounded-full bg-white/50" />
              <span className="h-[6px] w-[72px] rounded-full bg-white/50" />
              <span className="h-[6px] w-[72px] rounded-full bg-white/50" />
            </button>
          </header>

          <h1 className="mx-auto mt-[107px] max-w-[800px] text-center text-[108px] leading-24 font-bold">
            What is my IP address?
          </h1>

          <form onSubmit={(e) => e.preventDefault()}>
            <label htmlFor="ip" className="mt-[55px] block text-center text-[60px] leading-[72px]">
              Your public IP address is:&nbsp;
            </label>
            <input
              id="ip"
              type="text"
              defaultValue="116.107.98.198"
              className="mt-[30px] block h-[150px] w-full rounded-2xl border-3 border-black/20 bg-white bg-clip-padding pb-1 text-center text-[72px] font-bold text-black shadow-[inset_0_3px_8px_rgba(0,0,0,0.08)]"
            />
            <button type="submit" className="mt-12 block h-[150px] w-full rounded-[14px] bg-[#28DFB5] text-[54px] font-bold text-black">
              Lookup IP
            </button>
          </form>

          <MapPanel />

          <dl className="mt-[15px] flex items-baseline leading-[72px]">
            <dt className="w-[53%] text-[48px] font-bold">City:</dt>
            <dd className="font-['DejaVu_Sans_Mono',monospace] text-[42px] text-[#FBDDDF]">Hải Dương</dd>
          </dl>
        </div>
      </main>

      <BottomBar />
    </div>
  );
}
